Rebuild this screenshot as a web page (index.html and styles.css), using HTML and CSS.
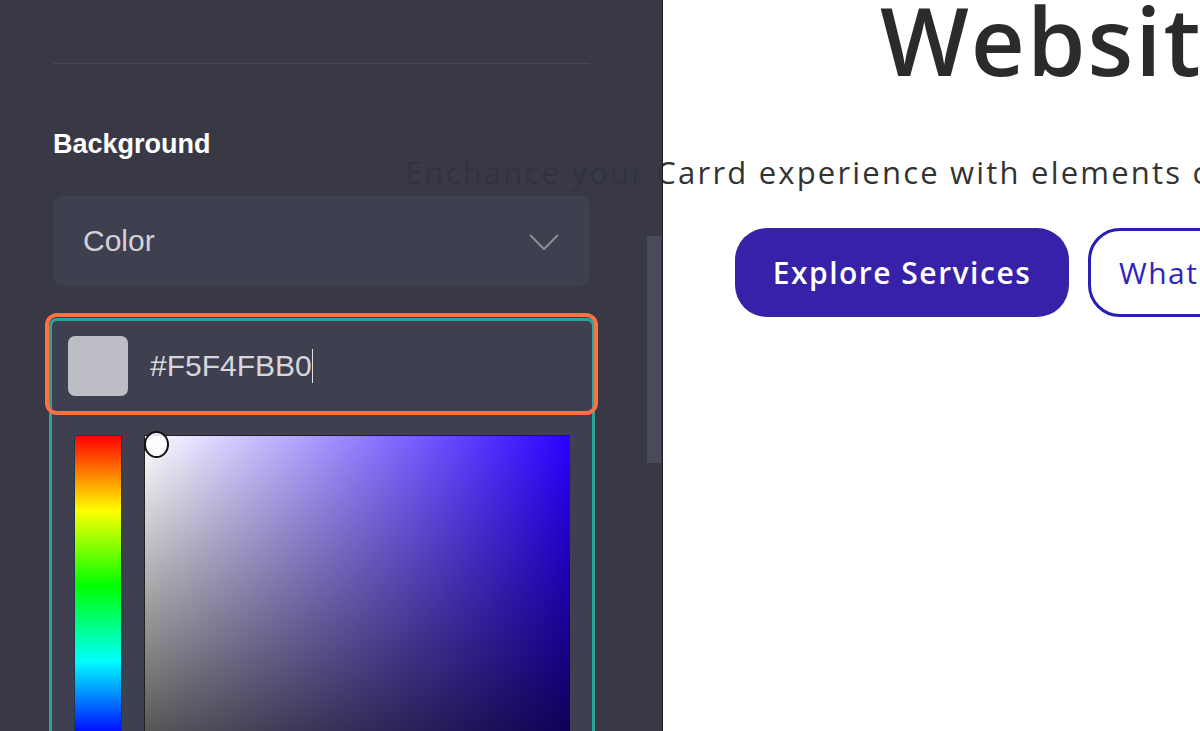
FILE: index.html
```html
<!DOCTYPE html>
<html lang="en">
<head>
    <meta charset="UTF-8">
    <meta name="viewport" content="width=device-width, initial-scale=1.0">
    <title>Carrd Editor - Background</title>
    <link rel="stylesheet" href="styles.css">
</head>
<body>
    <div class="app">
        <!-- site preview, sits under the editor panel -->
        <main class="preview">
            <h1 class="hero-title">Website Builder</h1>
            <p class="hero-sub">Enchance your Carrd experience with elements crafted for you</p>
            <div class="hero-actions">
                <a class="btn btn-solid" href="#">Explore Services</a>
                <a class="btn btn-outline" href="#">What We Do</a>
            </div>
        </main>

        <aside class="sidebar">
            <hr class="divider">

            <h2 class="field-label">Background</h2>

            <div class="select">
                <span>Color</span>
                <svg class="chevron" width="32" height="18" viewBox="0 0 32 18">
                    <path d="M2 2 L16 16 L30 2" fill="none" stroke="#8a8c99" stroke-width="2"/>
                </svg>
            </div>

            <div class="picker">
                <div class="focus-ring"></div>
                <div class="hex-row">
                    <div class="swatch"></div>
                    <span class="hex-value">#F5F4FBB0</span><span class="caret"></span>
                </div>
                <div class="picker-body">
                    <div class="hue-bar"></div>
                    <div class="sat-box">
                        <div class="sat-handle"></div>
                    </div>
                </div>
            </div>

            <div class="scrollbar"></div>
        </aside>
    </div>
</body>
</html>
```

FILE: styles.css
```css
html, body {
    margin: 0;
    padding: 0;
    height: 100%;
    overflow: hidden;
}
body {
    background-color: #fff;
    font-family: "Liberation Sans", Arial, sans-serif;
}
.app {
    position: relative;
    width: 1200px;
    height: 731px;
    overflow: hidden;
}

/* preview page */
.preview {
    font-family: "Open Sans", Lato, sans-serif;
    color: #2b2b2b;
    white-space: nowrap;
}
.hero-title {
    margin: 0;
    padding-left: 880px;
    font-size: 94px;
    line-height: 80px;
    font-weight: 600;
    letter-spacing: 2px;
}
.hero-sub {
    margin: 72px 0 0;
    padding-left: 405px;
    font-size: 31px;
    line-height: 40px;
    letter-spacing: 2.2px;
    color: #333;
}
.hero-actions {
    display: flex;
    gap: 19px;
    margin-top: 36px;
    padding-left: 735px;
}
.btn {
    display: flex;
    flex-shrink: 0;
    align-items: center;
    box-sizing: border-box;
    height: 89px;
    padding: 0 36px;
    border-radius: 32px;
    font-size: 30px;
    letter-spacing: 1.5px;
    text-decoration: none;
}
.btn-solid {
    width: 334px;
    justify-content: center;
    padding: 0;
    background-color: #3621a8;
    color: #fff;
    font-weight: 600;
}
.btn-outline {
    border: 3px solid #2a1db4;
    color: #3223bd;
    padding-left: 28px;
}

/* editor panel */
.sidebar {
    position: absolute;
    top: 0;
    left: 0;
    width: 663px;
    height: 731px;
    box-sizing: border-box;
    padding: 63px 72px 0 53px;
    background-color: rgba(51, 51, 64, 0.97);
    border-right: 1px solid #1f1f2c;
}
.divider {
    margin: 0;
    border: 0;
    height: 1px;
    background-color: #474757;
}
.field-label {
    margin: 64px 0 0;
    font-size: 27px;
    line-height: 32px;
    font-weight: bold;
    color: #fff;
}
.select {
    display: flex;
    align-items: center;
    justify-content: space-between;
    height: 90px;
    margin-top: 36px;
    padding: 0 30px;
    border-radius: 10px;
    background-color: #3f404f;
    color: #d2d2d8;
    font-size: 30px;
}
.chevron {
    margin-top: 2px;
}

.picker {
    position: relative;
    margin: 32px -5px 0 -4px;
    height: 440px;
    border: 3px solid #27a79b;
    border-radius: 8px;
    background-color: #3f404f;
}
.focus-ring {
    position: absolute;
    left: -7px;
    top: -8px;
    width: 553px;
    height: 102px;
    box-sizing: border-box;
    border: 4px solid #ff7043;
    border-radius: 12px;
}
.hex-row {
    display: flex;
    align-items: center;
    height: 90px;
    padding-left: 16px;
}
.swatch {
    width: 60px;
    height: 60px;
    border-radius: 7px;
    background-color: #bdbdc6;
}
.hex-value {
    margin-left: 22px;
    font-size: 30px;
    color: #d6d6dc;
}
.caret {
    width: 1px;
    height: 34px;
    background-color: #e0e0e6;
}
.picker-body {
    display: flex;
    gap: 22px;
    margin-top: 24px;
    padding-left: 22px;
}
.hue-bar {
    width: 46px;
    height: 450px;
    border: 1px solid #1d3a48;
    background: linear-gradient(to bottom, #f00 0%, #ff0 16.66%, #0f0 33.33%, #0ff 50%, #00f 66.66%, #f0f 83.33%, #f00 100%);
}
.sat-box {
    position: relative;
    width: 425px;
    height: 450px;
    border-top: 1px solid #222;
    border-left: 1px solid #222;
    background:
        linear-gradient(to bottom, rgba(0, 0, 0, 0), #000),
        linear-gradient(to right, #fff, rgba(255, 255, 255, 0)),
        #2a00ff;
}
.sat-handle {
    position: absolute;
    left: -1px;
    top: -5px;
    width: 21px;
    height: 23px;
    border-radius: 50%;
    border: 2px solid #111;
    background-color: rgba(255, 255, 255, 0.85);
    box-shadow: inset 0 0 0 1px #fff;
}

.scrollbar {
    position: absolute;
    left: 647px;
    top: 236px;
    width: 14px;
    height: 227px;
    background-color: #4a4b5a;
}
```
